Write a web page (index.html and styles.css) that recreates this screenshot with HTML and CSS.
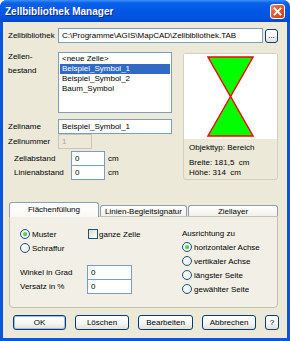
FILE: index.html
```html
<!DOCTYPE html>
<html lang="de">
<head>
  <meta charset="UTF-8" />
  <title>Zellbibliothek Manager</title>
  <link rel="stylesheet" href="styles.css">
</head>
<body>

<div class="window">
  <div class="titlebar">
    <span class="title">Zellbibliothek Manager</span>
    <div class="close-btn">
      <svg width="15" height="15" viewBox="0 0 15 15">
        <path d="M4.5 4.5 L10.5 10.5 M10.5 4.5 L4.5 10.5" stroke="#fff" stroke-width="1.8" stroke-linecap="square" />
      </svg>
    </div>
  </div>

  <div class="client">
    <div class="row-lib">
      <label class="lbl" for="lib">Zellbibliothek</label>
      <input id="lib" class="field w-lib" type="text" value="C:\Programme\AGIS\MapCAD\Zellbibliothek.TAB" />
      <button class="btn btn-dots">...</button>
    </div>

    <div class="row-main">
      <div class="left">
        <div class="row-list">
          <label class="lbl lbl-list">Zellen-<br>bestand</label>
          <div class="listbox">
            <div class="item">&lt;neue Zelle&gt;</div>
            <div class="item sel">Beispiel_Symbol_1</div>
            <div class="item">Beispiel_Symbol_2</div>
            <div class="item">Baum_Symbol</div>
          </div>
        </div>
        <div class="row-field name-row">
          <label class="lbl" for="name">Zellname</label>
          <input id="name" class="field w-name" type="text" value="Beispiel_Symbol_1" />
        </div>
        <div class="row-field">
          <label class="lbl" for="num">Zellnummer</label>
          <input id="num" class="field w-num" type="text" value="1" disabled />
        </div>
        <div class="row-field dist-first">
          <label class="lbl-dist" for="za">Zellabstand</label>
          <input id="za" class="field w-num" type="text" value="0" />
          <span class="unit">cm</span>
        </div>
        <div class="row-field dist-second">
          <label class="lbl-dist" for="la">Linienabstand</label>
          <input id="la" class="field w-num" type="text" value="0" />
          <span class="unit">cm</span>
        </div>
      </div>

      <div class="preview">
        <div class="pic">
          <svg width="47" height="81" viewBox="0 0 47 81">
            <polygon points="1,1 46,1 23.5,40.5" fill="#00ff00" stroke="#ff0000" stroke-width="1.4" />
            <polygon points="23.5,40.5 1,80 46,80" fill="#00ff00" stroke="#ff0000" stroke-width="1.4" />
          </svg>
        </div>
        <div class="info">
          <div class="info-type">Objekttyp: Bereich</div>
          <div class="info-line">Breite: 181,5&nbsp; cm</div>
          <div class="info-line">Höhe: 314&nbsp; cm</div>
        </div>
      </div>
    </div>

    <div class="tabs">
      <div class="tab active">Flächenfüllung</div>
      <div class="tab tab-2">Linien-Begleitsignatur</div>
      <div class="tab tab-3">Ziellayer</div>
    </div>
    <div class="tab-panel">
      <div class="fill-left">
        <div class="fill-row">
          <div class="opt opt-muster"><span class="radio on"></span>Muster</div>
          <div class="opt"><span class="check"></span>ganze Zelle</div>
        </div>
        <div class="fill-row">
          <div class="opt"><span class="radio"></span>Schraffur</div>
        </div>
        <div class="row-field angle-row">
          <label class="lbl-fill" for="deg">Winkel in Grad</label>
          <input id="deg" class="field w-fill" type="text" value="0" />
        </div>
        <div class="row-field shift-row">
          <label class="lbl-fill" for="shift">Versatz in %</label>
          <input id="shift" class="field w-fill" type="text" value="0" />
        </div>
      </div>
      <div class="fill-right">
        <div class="fill-row">Ausrichtung zu</div>
        <div class="fill-row"><span class="radio on"></span>horizontaler Achse</div>
        <div class="fill-row"><span class="radio"></span>vertikaler Achse</div>
        <div class="fill-row"><span class="radio"></span>längster Seite</div>
        <div class="fill-row"><span class="radio"></span>gewählter Seite</div>
      </div>
    </div>

    <div class="buttons">
      <button class="btn btn-ok">OK</button>
      <button class="btn btn-del">Löschen</button>
      <button class="btn btn-edit">Bearbeiten</button>
      <button class="btn btn-cancel">Abbrechen</button>
      <button class="btn btn-help">?</button>
    </div>
  </div>
</div>

</body>
</html>
```

FILE: styles.css
```css
html {
  background: #fff;
}

body {
  margin: 0;
  font-family: "Liberation Sans", Arial, sans-serif;
  font-size: 8px;
  color: #000;
}

.window {
  width: 290px;
  height: 341px;
  display: flex;
  flex-direction: column;
  border-radius: 7px 7px 0 0;
  overflow: hidden;
  background: #0a55dd;
}

/* Title bar */
.titlebar {
  height: 22px;
  flex: none;
  display: flex;
  align-items: center;
  padding: 0 5px 0 5px;
  background: linear-gradient(#3d8ff8 0, #0a62ea 3px, #0058e6 45%, #0052dd 85%, #0045c4 100%);
}

.title {
  color: #fff;
  font-weight: bold;
  font-size: 10px;
  text-shadow: 1px 1px 0 #0a2a8c;
}

.close-btn {
  margin-left: auto;
  width: 15px;
  height: 15px;
  box-sizing: border-box;
  border: 1px solid #fff;
  border-radius: 3px;
  background: linear-gradient(135deg, #f08a66 0, #e2582f 45%, #c8401a 100%);
}

.close-btn svg {
  display: block;
  margin: -1px;
}

/* Dialog client area */
.client {
  flex: 1;
  background: #ece9d8;
  border: 3px solid #0a55dd;
  border-top: none;
  padding: 6px 0 0 5px;
}

.lbl {
  width: 50px;
  flex: none;
}

.field {
  box-sizing: border-box;
  height: 15px;
  border: 1px solid #7f9db9;
  background: #fff;
  padding: 0 0 0 3px;
  margin: 0;
  font-family: inherit;
  font-size: 8px;
  color: #000;
  outline: none;
}

.field:disabled {
  background: #ece9d8;
  border-color: #c9c7ba;
  color: #aca899;
}

.btn {
  box-sizing: border-box;
  height: 15px;
  padding: 0;
  border: 1px solid #003c74;
  border-radius: 3px;
  background: linear-gradient(#ffffff 0, #f4f4f0 60%, #e3e0d6 100%);
  font-family: inherit;
  font-size: 8px;
  color: #000;
}

.row-lib {
  display: flex;
  align-items: center;
  height: 15px;
}

.w-lib { width: 205px; }

.btn-dots {
  width: 13px;
  height: 14px;
  margin-left: 2px;
  line-height: 8px;
}

/* List + preview */
.row-main {
  display: flex;
  margin-top: 9px;
}

.left {
  width: 164px;
  flex: none;
}

.row-list {
  display: flex;
}

.lbl-list {
  line-height: 14px;
  margin-top: -2px;
}

.listbox {
  box-sizing: border-box;
  width: 114px;
  height: 61px;
  border: 1px solid #7f9db9;
  padding: 1px 1px 0;
  background: #fff;
}

.item {
  height: 10px;
  line-height: 10px;
  padding-left: 2px;
}

.item.sel {
  background: #316ac5;
  color: #fff;
}

.row-field {
  display: flex;
  align-items: center;
  height: 15px;
}

.name-row { margin-top: 6px; }
.dist-first { margin-top: 2px; }
.dist-second { margin-top: -1px; }

.w-name { width: 114px; }
.w-num { width: 34px; }

.lbl-dist {
  width: 57px;
  margin-left: 6px;
  flex: none;
}

.unit {
  margin-left: 3px;
}

.preview {
  box-sizing: border-box;
  width: 95px;
  height: 127px;
  margin: 1px 0 0 11px;
  border: 1px solid #d0d0bf;
  border-radius: 3px;
}

.pic {
  height: 85px;
  background: #fff;
  display: flex;
  align-items: center;
  justify-content: center;
}

.info {
  padding-left: 5px;
}

.info-type {
  line-height: 13px;
  margin: 2px 0 4px;
}

.info-line {
  line-height: 10px;
}

/* Tabs */
.tabs {
  display: flex;
  align-items: flex-end;
  height: 14px;
  margin: 22px 0 0 1px;
}

.tab {
  box-sizing: border-box;
  height: 11px;
  border: 1px solid #8c9db4;
  border-bottom: none;
  border-radius: 3px 3px 0 0;
  background: linear-gradient(#ffffff, #f2f1ea);
  text-align: center;
  line-height: 11px;
  overflow: hidden;
  white-space: nowrap;
}

.tab.active {
  width: 90px;
  height: 15px;
  line-height: 13px;
  margin-bottom: -1px;
  position: relative;
  z-index: 1;
  background: linear-gradient(#ffffff, #f9f8f4);
}

.tab-2 { width: 87px; margin-left: 1px; }
.tab-3 { width: 90px; margin-left: 1px; }

.tab-panel {
  box-sizing: border-box;
  width: 269px;
  height: 92px;
  margin-left: 1px;
  border: 1px solid #c3c1b2;
  border-radius: 0 0 4px 4px;
  background: #f2f0e6;
  padding: 10px 0 0 10px;
  display: flex;
}

.fill-left {
  width: 162px;
  flex: none;
}

.fill-row {
  display: flex;
  align-items: center;
  height: 14px;
}

.opt {
  display: flex;
  align-items: center;
}

.opt-muster { width: 68px; }

.radio {
  box-sizing: border-box;
  width: 10px;
  height: 10px;
  flex: none;
  margin-right: 2px;
  border: 1px solid #1c5180;
  border-radius: 50%;
  background: radial-gradient(circle at 40% 40%, #ffffff, #e6e3d8);
  display: flex;
  align-items: center;
  justify-content: center;
}

.radio.on::after {
  content: "";
  width: 4px;
  height: 4px;
  border-radius: 50%;
  background: radial-gradient(circle at 35% 35%, #6fe06f, #21a121);
}

.check {
  box-sizing: border-box;
  width: 10px;
  height: 10px;
  flex: none;
  margin-right: 1px;
  border: 1px solid #1c5180;
  background: linear-gradient(135deg, #dcdad0, #ffffff);
}

.angle-row { margin-top: 10px; }
.shift-row { margin-top: -1px; }

.lbl-fill {
  width: 67px;
  flex: none;
}

.w-fill { width: 45px; }

.fill-right {
  margin-top: -1px;
}

/* Bottom buttons */
.buttons {
  display: flex;
  gap: 9px;
  margin: 7px 0 0 5px;
}

.btn-ok {
  width: 53px;
  box-shadow: inset 0 0 0 1px #9fbbef;
}

.btn-del { width: 54px; }
.btn-edit { width: 55px; }
.btn-cancel { width: 54px; }
.btn-help { width: 14px; }
```
